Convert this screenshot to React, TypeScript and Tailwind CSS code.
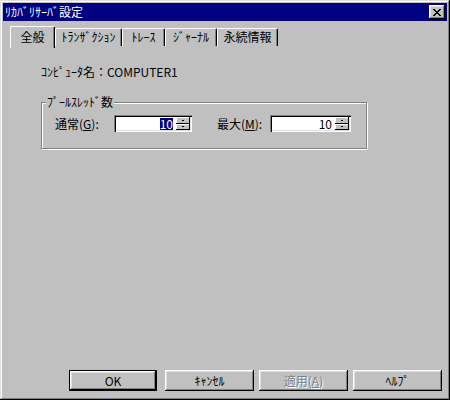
import React from 'react';

const bevelOut =
  'shadow-[inset_-1px_-1px_#000,inset_1px_1px_#fff,inset_-2px_-2px_#808080,inset_2px_2px_#dfdfdf]';

const CloseGlyph = () => (
  <svg width="8" height="7" viewBox="0 0 8 7" shapeRendering="crispEdges">
    <path
      d="M0 0h2v1H0zM6 0h2v1H6zM1 1h2v1H1zM5 1h2v1H5zM2 2h4v1H2zM3 3h2v1H3zM2 4h4v1H2zM1 5h2v1H1zM5 5h2v1H5zM0 6h2v1H0zM6 6h2v1H6z"
      fill="#000"
    />
  </svg>
);

const Tab = ({ label, width, active }: { label: string; width: string; active?: boolean }) => (
  <div
    className={
      active
        ? `${width} h-[22px] bg-[#c0c0c0] border-t border-l border-white border-r border-r-black rounded-t-[2px] shadow-[inset_-1px_0_#808080] flex justify-center pt-[3px] leading-[14px]`
        : `${width} mt-[2px] h-[18px] bg-[#c0c0c0] border-t border-l border-white border-r border-r-black rounded-t-[2px] shadow-[inset_-1px_0_#808080] flex justify-center pt-[1px] leading-[14px]`
    }
  >
    {label}
  </div>
);

const Spinner = ({ value, selected }: { value: string; selected?: boolean }) => (
  <div className="w-full h-[17px] bg-white shadow-[inset_1px_1px_#808080,inset_2px_2px_#000,inset_-1px_-1px_#fff,inset_-2px_-2px_#dfdfdf] flex p-[2px]">
    <div className="flex-1 flex justify-end items-center pr-[3px] leading-[12px]">
      <span className={selected ? 'bg-[#000080] text-white' : ''}>{value}</span>
    </div>
    <div className="w-[14px] flex flex-col">
      {[0, 1].map((i) => (
        <div
          key={i}
          className="flex-1 bg-[#c0c0c0] shadow-[inset_-1px_-1px_#000,inset_1px_1px_#fff] flex items-center justify-center"
        >
          <div className="w-[2px] h-[1px] bg-black" />
        </div>
      ))}
    </div>
  </div>
);

const Button = ({
  children,
  extra = '',
  disabled,
  isDefault,
}: {
  children: React.ReactNode;
  extra?: string;
  disabled?: boolean;
  isDefault?: boolean;
}) => (
  <div className={`${extra} h-[21px] ${isDefault ? 'border border-black' : ''}`}>
    <div
      className={`w-full h-full ${bevelOut} flex items-center justify-center leading-[14px] ${
        disabled ? 'text-[#808080] [text-shadow:1px_1px_0_#fff]' : 'text-black'
      }`}
    >
      {children}
    </div>
  </div>
);

export default function App() {
  return (
    <div
      className={`w-[450px] h-[400px] bg-[#c0c0c0] p-[3px] text-[12px] text-black font-['Noto_Sans_CJK_JP',sans-serif] shadow-[inset_-1px_-1px_#000,inset_1px_1px_#dfdfdf,inset_-2px_-2px_#808080,inset_2px_2px_#fff]`}
    >
      {/* title bar */}
      <div className="h-[18px] bg-[#000080] flex items-center justify-between pl-[2px] pr-[2px]">
        <span className="text-white leading-[14px]">ﾘｶﾊﾞﾘｻｰﾊﾞ設定</span>
        <div className={`w-[16px] h-[14px] bg-[#c0c0c0] ${bevelOut} flex items-center justify-center`}>
          <CloseGlyph />
        </div>
      </div>

      <div className="ml-[5px] mt-[5px] w-[434px]">
        {/* tabs */}
        <div className="h-[20px] flex items-start pl-[2px] relative z-10">
          <Tab label="全般" width="w-[45px]" active />
          <Tab label="ﾄﾗﾝｻﾞｸｼｮﾝ" width="w-[67px]" />
          <Tab label="ﾄﾚｰｽ" width="w-[43px]" />
          <Tab label="ｼﾞｬｰﾅﾙ" width="w-[52px]" />
          <Tab label="永続情報" width="w-[61px]" />
        </div>

        {/* panel */}
        <div className={`h-[318px] ${bevelOut.replace('#dfdfdf', '#c0c0c0')} pl-[33px] pt-[19px]`}>
          <div className="leading-[14px]">ｺﾝﾋﾟｭｰﾀ名：COMPUTER1</div>

          <div className="mt-[23px] w-[326px] h-[47px] border border-[#808080] shadow-[inset_1px_1px_#fff,1px_1px_#fff] relative">
            <span className="absolute -top-[8px] left-[4px] bg-[#c0c0c0] px-[1px] leading-[14px]">ﾌﾟｰﾙｽﾚｯﾄﾞ数</span>
            <div className="pt-[12px] pl-[13px] flex items-center">
              <div className="w-[59px] leading-[14px]">
                通常(<span className="underline">G</span>):
              </div>
              <div className="w-[78px]">
                <Spinner value="10" selected />
              </div>
              <div className="ml-[25px] w-[53px] leading-[14px]">
                最大(<span className="underline">M</span>):
              </div>
              <div className="w-[81px]">
                <Spinner value="10" />
              </div>
            </div>
          </div>
        </div>

        {/* buttons */}
        <div className="mt-[6px] flex justify-end gap-[5px]">
          <Button extra="w-[88px] mr-[3px]" isDefault>
            OK
          </Button>
          <Button extra="w-[89px]">ｷｬﾝｾﾙ</Button>
          <Button extra="w-[89px]" disabled>
            適用(<span className="underline">A</span>)
          </Button>
          <Button extra="w-[89px]">ﾍﾙﾌﾟ</Button>
        </div>
      </div>
    </div>
  );
}
